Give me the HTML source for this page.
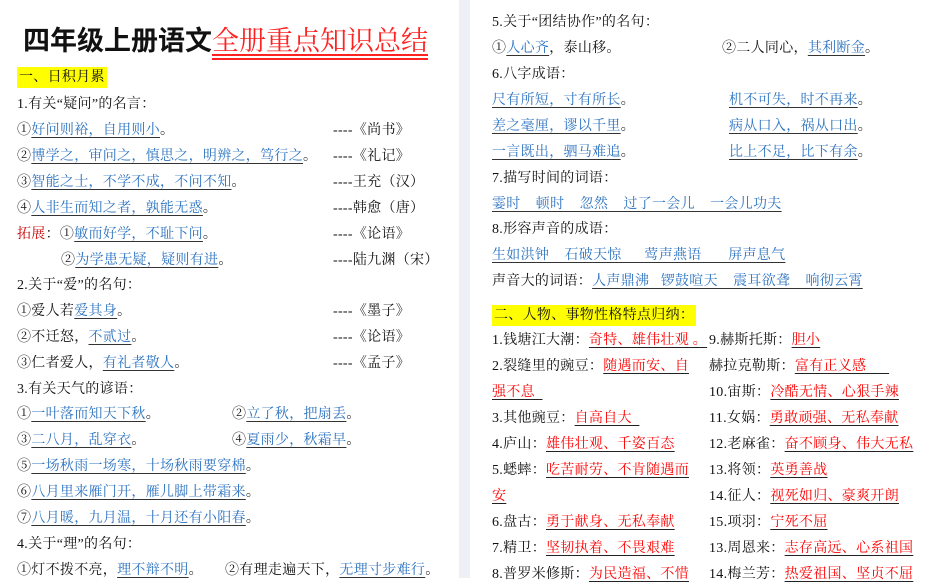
<!DOCTYPE html>
<html><head><meta charset="utf-8"><style>
*{margin:0;padding:0;box-sizing:border-box}
body{width:929px;height:578px;overflow:hidden;background:#fff;position:relative;font-family:"Liberation Serif","Noto Serif CJK SC","Noto Sans CJK SC",serif;font-size:14px;letter-spacing:.3px;color:#111}
.l{position:absolute;white-space:nowrap;line-height:18px;height:18px}
.b{color:#2a72c0;text-decoration:underline;text-decoration-color:#333;text-underline-offset:3px}
.r{color:#f00;text-decoration:underline;text-decoration-color:#222;text-underline-offset:3px}
.gut{position:absolute;left:459px;top:0;width:11px;height:578px;background:#eef0f5}
.hl{background:#ffff00;padding:3px 2px}
</style></head><body>
<div class="gut"></div>
<div class="l" style="left:23px;top:22px;height:34px;line-height:34px;font-size:27px;font-weight:bold;letter-spacing:0;font-family:'Noto Sans CJK SC',sans-serif">四年级上册语文<span style="color:#f22;font-weight:normal;font-family:'Noto Serif CJK SC',serif;text-decoration:underline double #f22;text-underline-offset:4px">全册重点知识总结</span></div>
<div class="l" style="left:17px;top:69px"><span class="hl">一、日积月累</span></div>
<div class="l" style="left:17px;top:96px">1.有关“疑问”的名言：</div>
<div class="l" style="left:17px;top:122px">①<span class="b">好问则裕，自用则小</span>。</div>
<div class="l" style="left:17px;top:148px">②<span class="b">博学之，审问之，慎思之，明辨之，笃行之</span>。</div>
<div class="l" style="left:17px;top:174px">③<span class="b">智能之士，不学不成，不问不知</span>。</div>
<div class="l" style="left:17px;top:200px">④<span class="b">人非生而知之者，孰能无惑</span>。</div>
<div class="l" style="left:17px;top:226px"><span style="color:#c00">拓展</span>：①<span class="b">敏而好学，不耻下问</span>。</div>
<div class="l" style="left:61px;top:252px">②<span class="b">为学患无疑，疑则有进</span>。</div>
<div class="l" style="left:333px;top:122px">----《尚书》</div>
<div class="l" style="left:333px;top:148px">----《礼记》</div>
<div class="l" style="left:333px;top:174px">----王充（汉）</div>
<div class="l" style="left:333px;top:200px">----韩愈（唐）</div>
<div class="l" style="left:333px;top:226px">----《论语》</div>
<div class="l" style="left:333px;top:252px">----陆九渊（宋）</div>
<div class="l" style="left:17px;top:277px">2.关于“爱”的名句：</div>
<div class="l" style="left:17px;top:303px">①爱人若<span class="b">爱其身</span>。</div>
<div class="l" style="left:17px;top:329px">②不迁怒，<span class="b">不贰过</span>。</div>
<div class="l" style="left:17px;top:355px">③仁者爱人，<span class="b">有礼者敬人</span>。</div>
<div class="l" style="left:333px;top:303px">----《墨子》</div>
<div class="l" style="left:333px;top:329px">----《论语》</div>
<div class="l" style="left:333px;top:355px">----《孟子》</div>
<div class="l" style="left:17px;top:381px">3.有关天气的谚语：</div>
<div class="l" style="left:17px;top:406px">①<span class="b">一叶落而知天下秋</span>。</div>
<div class="l" style="left:232px;top:406px">②<span class="b">立了秋，把扇丢</span>。</div>
<div class="l" style="left:17px;top:432px">③<span class="b">二八月，乱穿衣</span>。</div>
<div class="l" style="left:232px;top:432px">④<span class="b">夏雨少，秋霜早</span>。</div>
<div class="l" style="left:17px;top:458px">⑤<span class="b">一场秋雨一场寒，十场秋雨要穿棉</span>。</div>
<div class="l" style="left:17px;top:484px">⑥<span class="b">八月里来雁门开，雁儿脚上带霜来</span>。</div>
<div class="l" style="left:17px;top:510px">⑦<span class="b">八月暖，九月温，十月还有小阳春</span>。</div>
<div class="l" style="left:17px;top:536px">4.关于“理”的名句：</div>
<div class="l" style="left:17px;top:562px">①灯不拨不亮，<span class="b">理不辩不明</span>。</div>
<div class="l" style="left:225px;top:562px">②有理走遍天下，<span class="b">无理寸步难行</span>。</div>

<div class="l" style="left:492px;top:14px">5.关于“团结协作”的名句：</div>
<div class="l" style="left:492px;top:40px">①<span class="b">人心齐</span>，泰山移。</div>
<div class="l" style="left:722px;top:40px">②二人同心，<span class="b">其利断金</span>。</div>
<div class="l" style="left:492px;top:66px">6.八字成语：</div>
<div class="l" style="left:492px;top:92px"><span class="b">尺有所短，寸有所长</span>。</div>
<div class="l" style="left:729px;top:92px"><span class="b">机不可失，时不再来</span>。</div>
<div class="l" style="left:492px;top:118px"><span class="b">差之毫厘，谬以千里</span>。</div>
<div class="l" style="left:729px;top:118px"><span class="b">病从口入，祸从口出</span>。</div>
<div class="l" style="left:492px;top:144px"><span class="b">一言既出，驷马难追</span>。</div>
<div class="l" style="left:729px;top:144px"><span class="b">比上不足，比下有余</span>。</div>
<div class="l" style="left:492px;top:170px">7.描写时间的词语：</div>
<div class="l" style="left:492px;top:196px"><span class="b" style="white-space:pre">霎时    顿时    忽然    过了一会儿    一会儿功夫</span></div>
<div class="l" style="left:492px;top:221px">8.形容声音的成语：</div>
<div class="l" style="left:492px;top:247px"><span class="b" style="white-space:pre">生如洪钟    石破天惊      莺声燕语       屏声息气</span></div>
<div class="l" style="left:492px;top:273px">声音大的词语：<span class="b" style="white-space:pre">人声鼎沸   锣鼓喧天    震耳欲聋    响彻云霄</span></div>
<div class="l" style="left:492px;top:307px"><span class="hl">二、人物、事物性格特点归纳：</span></div>
<div class="l" style="left:492px;top:332px">1.钱塘江大潮：<span class="r">奇特、雄伟壮观 。</span></div>
<div class="l" style="left:492px;top:358px">2.裂缝里的豌豆：<span class="r">随遇而安、自</span></div>
<div class="l" style="left:492px;top:384px"><span class="r">强不息&nbsp;&nbsp;</span></div>
<div class="l" style="left:492px;top:410px">3.其他豌豆：<span class="r">自高自大&nbsp;&nbsp;</span></div>
<div class="l" style="left:492px;top:436px">4.庐山：<span class="r">雄伟壮观、千姿百态</span></div>
<div class="l" style="left:492px;top:462px">5.蟋蟀：<span class="r">吃苦耐劳、不肯随遇而</span></div>
<div class="l" style="left:492px;top:488px"><span class="r">安</span></div>
<div class="l" style="left:492px;top:514px">6.盘古：<span class="r">勇于献身、无私奉献</span></div>
<div class="l" style="left:492px;top:540px">7.精卫：<span class="r">坚韧执着、不畏艰难</span></div>
<div class="l" style="left:492px;top:566px">8.普罗米修斯：<span class="r">为民造福、不惜</span></div>
<div class="l" style="left:709px;top:332px">9.赫斯托斯：<span class="r">胆小</span></div>
<div class="l" style="left:709px;top:358px">赫拉克勒斯：<span class="r" style="white-space:pre">富有正义感      </span></div>
<div class="l" style="left:709px;top:384px">10.宙斯：<span class="r">冷酷无情、心狠手辣</span></div>
<div class="l" style="left:709px;top:410px">11.女娲：<span class="r">勇敢顽强、无私奉献</span></div>
<div class="l" style="left:709px;top:436px">12.老麻雀：<span class="r">奋不顾身、伟大无私</span></div>
<div class="l" style="left:709px;top:462px">13.将领：<span class="r">英勇善战</span></div>
<div class="l" style="left:709px;top:488px">14.征人：<span class="r">视死如归、豪爽开朗</span></div>
<div class="l" style="left:709px;top:514px">15.项羽：<span class="r">宁死不屈</span></div>
<div class="l" style="left:709px;top:540px">13.周恩来：<span class="r">志存高远、心系祖国</span></div>
<div class="l" style="left:709px;top:566px">14.梅兰芳：<span class="r">热爱祖国、坚贞不屈</span></div>
</body></html>
